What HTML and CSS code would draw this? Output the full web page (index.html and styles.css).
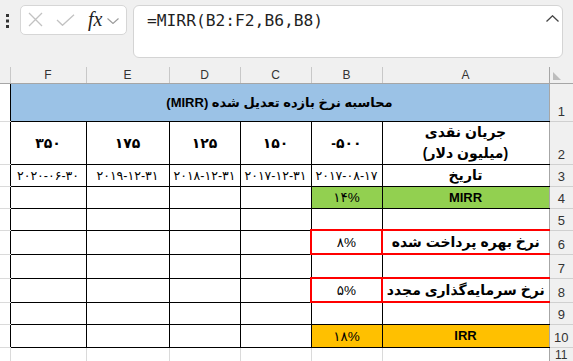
FILE: index.html
```html
<!DOCTYPE html>
<html lang="fa">
<head>
    <meta charset="UTF-8">
    <title>MIRR</title>
    <link rel="stylesheet" href="styles.css">
</head>
<body>
    <div class="formula-bar">
        <div class="grip">
            <svg width="3" height="14" viewBox="0 0 3 14"><rect x="0" y="0" width="3" height="3" fill="#333"/><rect x="0" y="5.5" width="3" height="3" fill="#333"/><rect x="0" y="11" width="3" height="3" fill="#333"/></svg>
        </div>
        <div class="func-box">
            <svg class="ico-x" width="15" height="15" viewBox="0 0 15 15"><path d="M1 1 L14 14 M14 1 L1 14" stroke="#c2c2c2" stroke-width="1.3" fill="none"/></svg>
            <svg class="ico-ok" width="19" height="12" viewBox="0 0 19 12"><path d="M1 6 L6.5 11.3 L18 0.7" stroke="#c2c2c2" stroke-width="1.3" fill="none"/></svg>
            <span class="fx">fx</span>
            <svg class="ico-down" width="12" height="6" viewBox="0 0 12 6"><path d="M0.5 0.5 L6 5.5 L11.5 0.5" stroke="#9a9a9a" stroke-width="1.1" fill="none"/></svg>
        </div>
        <div class="formula-input">
            <span class="formula-text">=MIRR(B2:F2,B6,B8)</span>
            <svg class="ico-up" width="13" height="7" viewBox="0 0 13 7"><path d="M0.5 6.5 L6.5 0.8 L12.5 6.5" stroke="#444" stroke-width="1.3" fill="none"/></svg>
        </div>
    </div>

    <table class="sheet">
        <colgroup>
            <col class="w-g"><col class="w-f"><col class="w-e"><col class="w-d"><col class="w-c"><col class="w-b"><col class="w-a"><col class="w-rn">
        </colgroup>
        <tr class="h-hdr">
            <td class="col-hd col-hd-g"></td>
            <td class="col-hd">F</td>
            <td class="col-hd">E</td>
            <td class="col-hd">D</td>
            <td class="col-hd">C</td>
            <td class="col-hd">B</td>
            <td class="col-hd">A</td>
            <td class="corner"><svg width="8" height="8" viewBox="0 0 8 8"><polygon points="0,0 0,8 8,8" fill="#bdbdbd"/></svg></td>
        </tr>
        <tr class="h-38">
            <td class="g"></td>
            <td class="title" colspan="6" dir="rtl">محاسبه نرخ بازده تعدیل شده (MIRR)</td>
            <td class="rn">1</td>
        </tr>
        <tr class="h-42">
            <td class="g"></td>
            <td class="c bold num">۳۵۰</td>
            <td class="c bold num">۱۷۵</td>
            <td class="c bold num">۱۲۵</td>
            <td class="c bold num">۱۵۰</td>
            <td class="c bold num" dir="ltr">-۵۰۰</td>
            <td class="c a bold fa label2" dir="rtl">جریان نقدی<br>(میلیون دلار)</td>
            <td class="rn">2</td>
        </tr>
        <tr class="h-22">
            <td class="g"></td>
            <td class="c date" dir="ltr">۲۰۲۰-۰۶-۳۰</td>
            <td class="c date" dir="ltr">۲۰۱۹-۱۲-۳۱</td>
            <td class="c date" dir="ltr">۲۰۱۸-۱۲-۳۱</td>
            <td class="c date" dir="ltr">۲۰۱۷-۱۲-۳۱</td>
            <td class="c date" dir="ltr">۲۰۱۷-۰۸-۱۷</td>
            <td class="c a bold fa" dir="rtl">تاریخ</td>
            <td class="rn">3</td>
        </tr>
        <tr class="h-22">
            <td class="g"></td>
            <td class="c"></td><td class="c"></td><td class="c"></td><td class="c"></td>
            <td class="c green pct" dir="ltr">۱۴%</td>
            <td class="c a green bold">MIRR</td>
            <td class="rn">4</td>
        </tr>
        <tr class="h-22">
            <td class="g"></td>
            <td class="c"></td><td class="c"></td><td class="c"></td><td class="c"></td><td class="c"></td>
            <td class="c a"></td>
            <td class="rn">5</td>
        </tr>
        <tr class="h-24">
            <td class="g"></td>
            <td class="c"></td><td class="c"></td><td class="c"></td><td class="c"></td>
            <td class="c red-box pct" dir="ltr">۸%</td>
            <td class="c a red-row bold fa" dir="rtl">نرخ بهره پرداخت شده</td>
            <td class="rn">6</td>
        </tr>
        <tr class="h-24">
            <td class="g"></td>
            <td class="c"></td><td class="c"></td><td class="c"></td><td class="c"></td><td class="c"></td>
            <td class="c a"></td>
            <td class="rn">7</td>
        </tr>
        <tr class="h-24">
            <td class="g"></td>
            <td class="c"></td><td class="c"></td><td class="c"></td><td class="c"></td>
            <td class="c red-box pct" dir="ltr">۵%</td>
            <td class="c a red-row bold fa" dir="rtl">نرخ سرمایه‌گذاری مجدد</td>
            <td class="rn">8</td>
        </tr>
        <tr class="h-22">
            <td class="g"></td>
            <td class="c"></td><td class="c"></td><td class="c"></td><td class="c"></td><td class="c"></td>
            <td class="c a"></td>
            <td class="rn">9</td>
        </tr>
        <tr class="h-23">
            <td class="g"></td>
            <td class="c"></td><td class="c"></td><td class="c"></td><td class="c"></td>
            <td class="c orange pct" dir="ltr">۱۸%</td>
            <td class="c a orange bold">IRR</td>
            <td class="rn">10</td>
        </tr>
        <tr class="h-15">
            <td class="g"></td>
            <td class="e"></td><td class="e"></td><td class="e"></td><td class="e"></td><td class="e"></td><td class="e"></td>
            <td class="rn rn-last">11</td>
        </tr>
    </table>
</body>
</html>
```

FILE: styles.css
```css
body {
    margin: 0;
    width: 573px;
    height: 361px;
    overflow: hidden;
    background: #f0f0f0;
    font-family: "Liberation Sans", "DejaVu Sans", sans-serif;
}

/* formula bar */

.formula-bar {
    display: flex;
    align-items: flex-start;
    height: 67px;
    box-sizing: border-box;
    padding: 5px 0 0 6px;
}

.grip {
    width: 14px;
    padding-top: 9px;
}

.func-box {
    display: flex;
    align-items: center;
    width: 107px;
    height: 30px;
    box-sizing: border-box;
    padding-left: 7px;
    border: 1px solid #d6d6d6;
    border-radius: 5px;
    background: #fff;
}

.ico-x {
    margin-top: -1px;
}

.ico-ok {
    margin-left: 13px;
}

.fx {
    margin-left: 13px;
    margin-top: -2px;
    font-family: "Liberation Serif", serif;
    font-style: italic;
    font-size: 20px;
    line-height: 20px;
    color: #222;
}

.ico-down {
    margin-left: 5px;
    margin-top: 2px;
}

.formula-input {
    display: flex;
    justify-content: space-between;
    align-items: flex-start;
    width: 430px;
    height: 53px;
    box-sizing: border-box;
    margin-left: 6px;
    padding: 5px 3px 0 13px;
    border: 1px solid #d4d4d4;
    border-radius: 6px;
    background: #fff;
}

.formula-text {
    font-family: "DejaVu Sans Mono", monospace;
    font-size: 16.25px;
    line-height: 20px;
    color: #1f1f1f;
}

.ico-up {
    margin-top: 4px;
}

/* sheet */

.sheet {
    width: 573px;
    table-layout: fixed;
    border-collapse: collapse;
    border-spacing: 0;
    background: #fff;
}

.w-g { width: 10px; }
.w-f { width: 76px; }
.w-e { width: 83px; }
.w-d { width: 71px; }
.w-c { width: 71px; }
.w-b { width: 71px; }
.w-a { width: 167px; }
.w-rn { width: 24px; }

.sheet td {
    padding: 0;
    text-align: center;
    vertical-align: middle;
    font-size: 13px;
    color: #000;
    white-space: nowrap;
    overflow: hidden;
}

.h-hdr { height: 16px; }
.h-38 { height: 38px; }
.h-42 { height: 42px; }
.h-22 { height: 22px; }
.h-23 { height: 23px; }
.h-24 { height: 24px; }
.h-15 { height: 15px; }

.sheet .col-hd {
    background: #f0f0f0;
    border-left: 1px solid #c8c8c8;
    border-bottom: 1px solid #a6a6a6;
    font-size: 12px;
    color: #333;
}

.sheet .col-hd-g {
    border-left: 0;
}

.sheet .corner {
    background: #f0f0f0;
    border-left: 1px solid #a6a6a6;
    border-bottom: 1px solid #a6a6a6;
    text-align: left;
    vertical-align: bottom;
    padding: 0 0 3px 3px;
    line-height: 0;
}

.sheet .rn {
    background: #f0f0f0;
    border-left: 1px solid #a6a6a6;
    border-bottom: 1px solid #d0d0d0;
    vertical-align: bottom;
    padding-bottom: 2px;
    line-height: 14px;
    font-size: 13px;
    color: #333;
}

.sheet .rn-last {
    vertical-align: top;
    padding: 1px 0 0;
    font-size: 12px;
    line-height: 13px;
}

.g {
    border-bottom: 1px solid #dadada;
}

.e {
    border-left: 1px solid #dadada;
    border-bottom: 1px solid #dadada;
}

.sheet .title {
    background: #9bc2e6;
    border-left: 1px solid #000;
    border-bottom: 1px solid #000;
    font-weight: bold;
    font-size: 13px;
}

.c {
    border: 1px solid #000;
}

.c.a {
    border-right: 0;
}

.bold {
    font-weight: bold;
}

.sheet .fa {
    font-size: 14px;
}

.sheet .num {
    font-size: 14px;
}

.sheet .pct {
    font-size: 13.5px;
}

.sheet .label2 {
    line-height: 21px;
}

.sheet .date {
    font-size: 12.5px;
}

.green {
    background: #92d050;
}

.orange {
    background: #ffc000;
}

.c.red-box {
    border: 2px solid #ff0000;
}

.c.red-row {
    border-top: 2px solid #ff0000;
    border-bottom: 2px solid #ff0000;
}
```
